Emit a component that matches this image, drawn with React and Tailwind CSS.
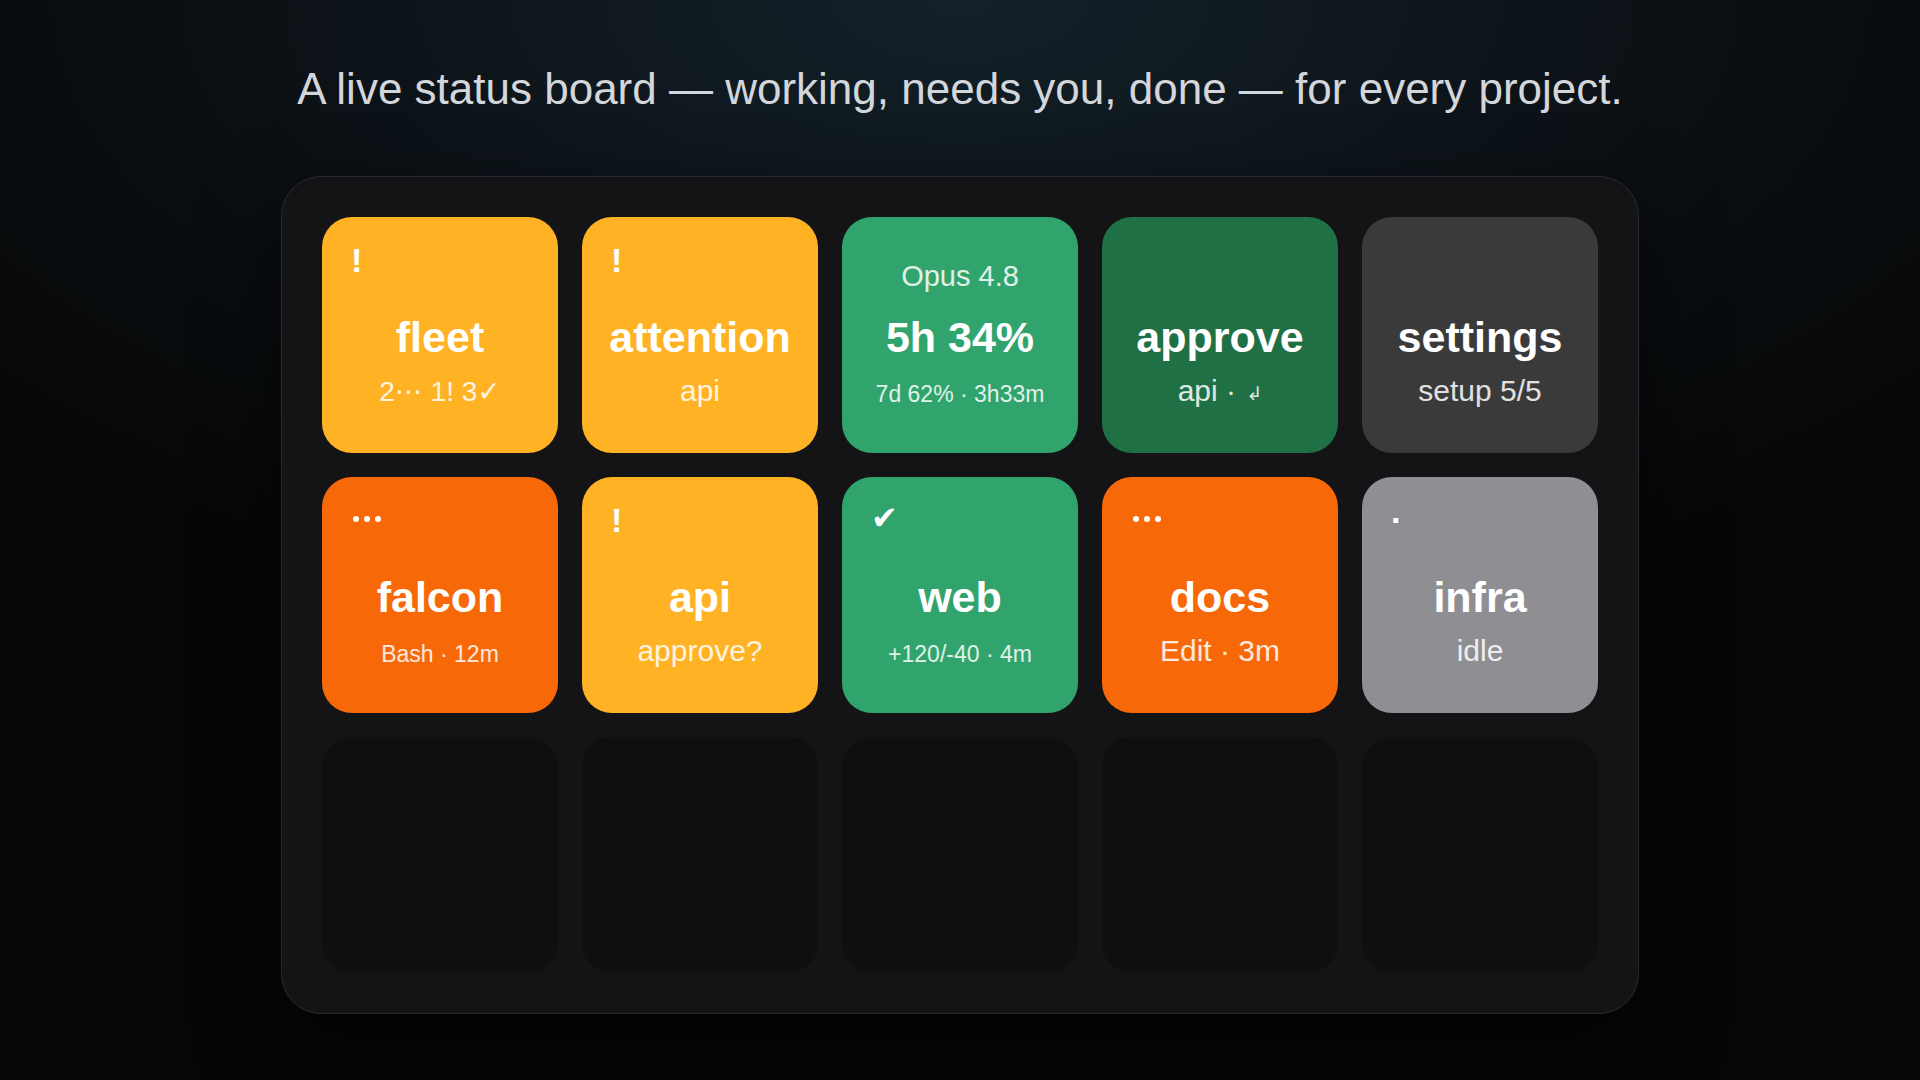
import React from 'react';

const tiles = [
    { bg: 'bg-[#ffb224]', icon: '!', title: 'fleet', sub: '2⋯ 1! 3✓', size: 'mid' },
    { bg: 'bg-[#ffb224]', icon: '!', title: 'attention', sub: 'api' },
    { bg: 'bg-[#30a46c]', top: 'Opus 4.8', title: '5h 34%', sub: '7d 62% · 3h33m', size: 'sm' },
    { bg: 'bg-[#1f7145]', title: 'approve', sub: 'api · ', enter: true },
    { bg: 'bg-[#3a3a3a]', title: 'settings', sub: 'setup 5/5' },
    { bg: 'bg-[#f76808]', icon: 'dots', title: 'falcon', sub: 'Bash · 12m', size: 'sm' },
    { bg: 'bg-[#ffb224]', icon: '!', title: 'api', sub: 'approve?' },
    { bg: 'bg-[#30a46c]', icon: '✔', title: 'web', sub: '+120/-40 · 4m', size: 'sm' },
    { bg: 'bg-[#f76808]', icon: 'dots', title: 'docs', sub: 'Edit · 3m' },
    { bg: 'bg-[#8e8e93]', icon: '·', title: 'infra', sub: 'idle' },
];

const StatusIcon = ({ icon }) => {
    if (icon === 'dots') {
        return (
            <div className="absolute left-[31px] top-[39px] flex gap-[5px]">
                <span className="w-[6px] h-[6px] rounded-full bg-white" />
                <span className="w-[6px] h-[6px] rounded-full bg-white" />
                <span className="w-[6px] h-[6px] rounded-full bg-white" />
            </div>
        );
    }
    if (icon === '✔') {
        return (
            <span className="absolute left-[29px] top-[23px] text-[32px] leading-[36px] text-white">
                {icon}
            </span>
        );
    }
    return (
        <span className="absolute left-[29px] top-[26px] text-[34px] leading-[34px] font-bold text-white">
            {icon}
        </span>
    );
};

const Tile = ({ tile }) => {
    if (!tile) {
        return <div className="h-[236px] rounded-[30px] bg-[#0e0f11]" />;
    }

    const subClass =
        tile.size === 'sm'
            ? 'text-[23px] mt-[15px]'
            : tile.size === 'mid'
                ? 'text-[28px] mt-[13px]'
                : 'text-[30px] mt-3';

    return (
        <div className={`relative h-[236px] rounded-[30px] ${tile.bg} flex flex-col items-center pt-[41px] text-white`}>
            {tile.icon && <StatusIcon icon={tile.icon} />}
            <div className="h-[36px] text-[29px] leading-[36px] text-white/85">{tile.top}</div>
            <div className="mt-[19px] text-[43px] leading-[48px] font-bold">{tile.title}</div>
            <div className={`${subClass} leading-[36px] text-white/85 whitespace-nowrap`}>
                {tile.sub}
                {tile.enter && <span className="text-[19px] ml-[2px] align-[1px]">↲</span>}
            </div>
        </div>
    );
};

export default function App() {
    const cells = [...tiles, null, null, null, null, null];

    return (
        <div className="min-h-screen w-full bg-[radial-gradient(ellipse_70%_60%_at_50%_0%,#132129_0%,#0b1014_55%,#060606_100%)] bg-[#060606] font-['Liberation_Sans','DejaVu_Sans',sans-serif] flex flex-col items-center">
            <h1 className="mt-[63px] text-[44px] leading-[52px] text-[#d3d6da] font-normal">
                A live status board — working, needs you, done — for every project.
            </h1>

            {/* Board panel */}
            <div className="mt-[61px] w-[1358px] rounded-[40px] border border-[#2a2a2e] bg-[#141416] p-10 shadow-[0_30px_80px_rgba(0,0,0,0.6)]">
                <div className="grid grid-cols-5 gap-6">
                    {cells.map((tile, i) => (
                        <Tile key={i} tile={tile} />
                    ))}
                </div>
            </div>
        </div>
    );
}
